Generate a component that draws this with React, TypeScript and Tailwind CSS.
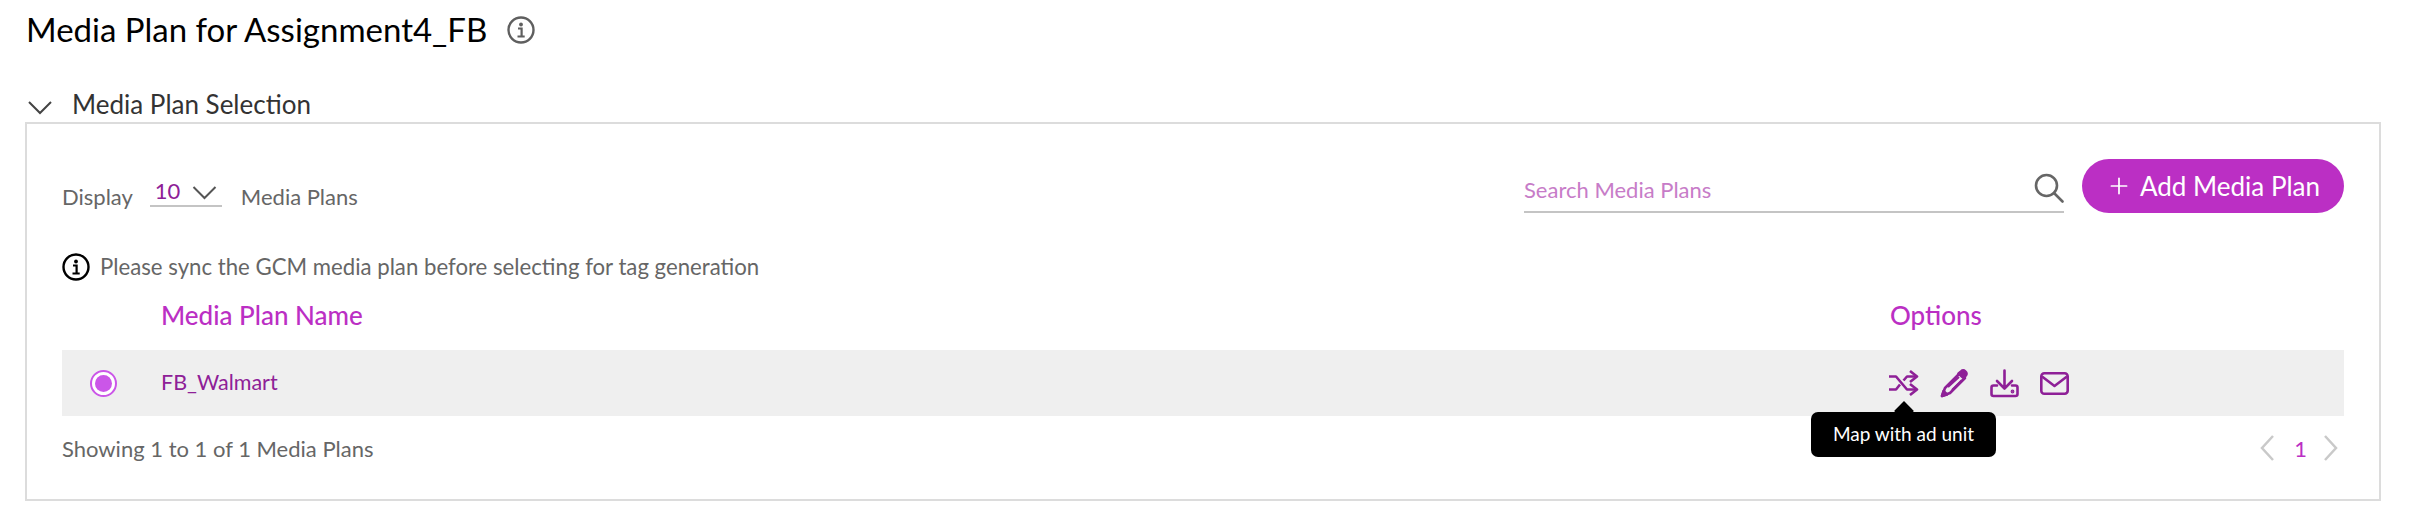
import React from "react";
import { Plus } from "lucide-react";

function Info({ className }: { className: string }) {
  return (
    <svg viewBox="0 0 28 28" className={className} fill="none" stroke="currentColor">
      <circle cx="14" cy="14" r="12.5" strokeWidth="2.4" />
      <circle cx="14" cy="8.5" r="1.9" fill="currentColor" stroke="none" />
      <path d="M11 12.5h3.6v7.5M10.5 20.5h7.2" strokeWidth="2.2" />
    </svg>
  );
}

function Chevron({ className, d }: { className: string; d: string }) {
  return (
    <svg viewBox="0 0 24 14" className={className} fill="none" stroke="currentColor" strokeWidth="2">
      <path d={d} />
    </svg>
  );
}

function ShuffleIcon() {
  return (
    <svg viewBox="0 0 30 26" className="w-[30px] h-[26px] text-[#8e2097]" fill="none" stroke="currentColor" strokeWidth="2.600" strokeLinejoin="round">
      <path d="M0 6.500h7L18 19.500h10" />
      <path d="M0 19.500h7l4-5M14.500 10.500l3.500-4h10" />
      <path d="M21 1l7 5.500-7 5.500M21 14l7 5.500-7 5.500" />
    </svg>
  );
}

function Pencil() {
  return (
    <svg viewBox="0 0 29 29" className="w-[29px] h-[29px] text-[#8e2097]" fill="none" stroke="currentColor" strokeWidth="2.600" strokeLinejoin="round">
      <path d="M20 4 25 9 10 24 2 27 5 19Z" />
      <path d="M21 2.500c1.400-1.300 3-1.300 4.300-.1 1.500 1.400 1.500 3 .2 4.400L23.500 9 18.500 4.500Z" fill="currentColor" />
      <path d="M8 18 19 8M12 21 22 11" strokeWidth="2" />
      <path d="M2 27l1.500-5 3.500 3.500Z" fill="currentColor" />
    </svg>
  );
}

function Download() {
  return (
    <svg viewBox="0 0 29 29" className="w-[29px] h-[29px] text-[#8e2097]" fill="none" stroke="currentColor" strokeWidth="2.600" strokeLinecap="round" strokeLinejoin="round">
      <path d="M14.500 1.500V19M7 12l7.500 7.500L22 12" />
      <path d="M7 16.500H3.500a2 2 0 0 0-2 2V25a2 2 0 0 0 2 2h22a2 2 0 0 0 2-2v-6.500a2 2 0 0 0-2-2H22" />
      <circle cx="22.500" cy="22.500" r="0.600" fill="currentColor" />
    </svg>
  );
}

function Mail() {
  return (
    <svg viewBox="0 0 29 23" className="w-[29px] h-[23px] text-[#8e2097]" fill="none" stroke="currentColor" strokeWidth="2.600" strokeLinejoin="round">
      <rect x="1.300" y="1.300" width="26.400" height="20.400" rx="3" />
      <path d="M2 4.500 14.500 14 27 4.500" />
    </svg>
  );
}

function SearchIcon() {
  return (
    <svg viewBox="0 0 30 30" className="w-[30px] h-[30px] text-[#666666]" fill="none" stroke="currentColor" strokeWidth="2.600" strokeLinecap="round">
      <circle cx="12.500" cy="12.500" r="10.500" />
      <path d="M20 20l8.500 8.500" />
    </svg>
  );
}

export default function App() {
  return (
    <div className="w-[2418px] h-[530px] bg-white overflow-hidden font-['Lato',sans-serif]">
      <div className="flex items-center h-[60px] pl-[26px] text-[33px] text-black">
        <span>Media Plan for Assignment4_FB</span>
        <Info className="ml-[20px] w-[28px] h-[28px] text-[#5f5f5f]" />
      </div>
      <div className="flex items-center h-[30px] mt-[29px] pl-[28px] text-[26px] text-[#333333]">
        <Chevron className="w-[24px] h-[14px] text-[#444444] mt-[8px]" d="M1 1l11 11L23 1" />
        <span className="ml-[20px]">Media Plan Selection</span>
      </div>
      <div className="mx-[25px] mt-[3px] w-[2356px] h-[379px] border-2 border-[#dcdcdc] px-[35px] pt-[35px]">
        <div className="flex items-start justify-between h-[54px]">
          <div className="flex items-start text-[22px] text-[#666666] pt-[8px]">
            <span className="mt-[13px]">Display</span>
            <div className="ml-[17px] w-[72px] h-[40px] border-b-2 border-[#c4c4c4] flex items-start pl-[5px]">
              <span className="text-[#8e2097] text-[22px] leading-[32px] mt-[8px]">10</span>
              <Chevron className="ml-[12px] mt-[19px] w-[25px] h-[14px] text-[#555555]" d="M1 1l11 11L23 1" />
            </div>
            <span className="ml-[19px] mt-[13px]">Media Plans</span>
          </div>
          <div className="flex items-start">
            <div className="w-[540px] h-[40px] mt-[14px] border-b-2 border-[#c4c4c4] flex items-start justify-between text-[22px] text-[#c77cc8]">
              <span>Search Media Plans</span>
              <SearchIcon />
            </div>
            <button className="ml-[18px] w-[262px] h-[54px] rounded-full bg-[#bb2fc4] text-white text-[26px] flex items-center justify-center gap-[8px]">
              <Plus className="w-[26px] h-[26px]" strokeWidth={1.600} />
              <span>Add Media Plan</span>
            </button>
          </div>
        </div>
        <div className="flex items-center h-[28px] mt-[40px] text-[22.2px] text-[#666666]">
          <Info className="w-[28px] h-[28px] text-black" />
          <span className="ml-[10px]">Please sync the GCM media plan before selecting for tag generation</span>
        </div>
        <div className="flex items-center h-[40px] mt-[14px] text-[26px] text-[#bb2fc4] font-medium">
          <span className="ml-[99px] w-[1729px]">Media Plan Name</span>
          <span>Options</span>
        </div>
        <div className="relative flex items-center h-[66px] mt-[15px] bg-[#efefef]">
          <div className="ml-[28px] w-[27px] h-[27px] rounded-full border-2 border-[#cb56e8] bg-white flex items-center justify-center">
            <div className="w-[17px] h-[17px] rounded-full bg-[#cb56e8]" />
          </div>
          <span className="ml-[44px] w-[1728px] text-[21.5px] text-[#8e2097] -mt-[2px]">FB_Walmart</span>
          <div className="flex items-center gap-[21px]">
            <ShuffleIcon />
            <Pencil />
            <Download />
            <Mail />
          </div>
          <div className="absolute left-[1749px] top-[62px] w-[185px] h-[45px] rounded-[7px] bg-black text-white text-[19px] flex items-center justify-center">
            <div className="absolute left-[86px] -top-[8px] w-[14px] h-[14px] rotate-45 bg-black" />
            <span className="relative">Map with ad unit</span>
          </div>
        </div>
        <div className="flex items-center justify-between h-[30px] mt-[17px] text-[22px] text-[#666666]">
          <span>Showing 1 to 1 of 1 Media Plans</span>
          <div className="flex items-center">
            <svg viewBox="0 0 14 26" className="w-[14px] h-[26px] text-[#c9c9c9]" fill="none" stroke="currentColor" strokeWidth="2.500"><path d="M13 1 2 13l11 12" /></svg>
            <span className="ml-[20px] mr-[17px] text-[#bb2fc4]">1</span>
            <svg viewBox="0 0 14 26" className="w-[14px] h-[26px] mr-[6px] text-[#c9c9c9]" fill="none" stroke="currentColor" strokeWidth="2.500"><path d="m1 1 11 12L1 25" /></svg>
          </div>
        </div>
      </div>
    </div>
  );
}
